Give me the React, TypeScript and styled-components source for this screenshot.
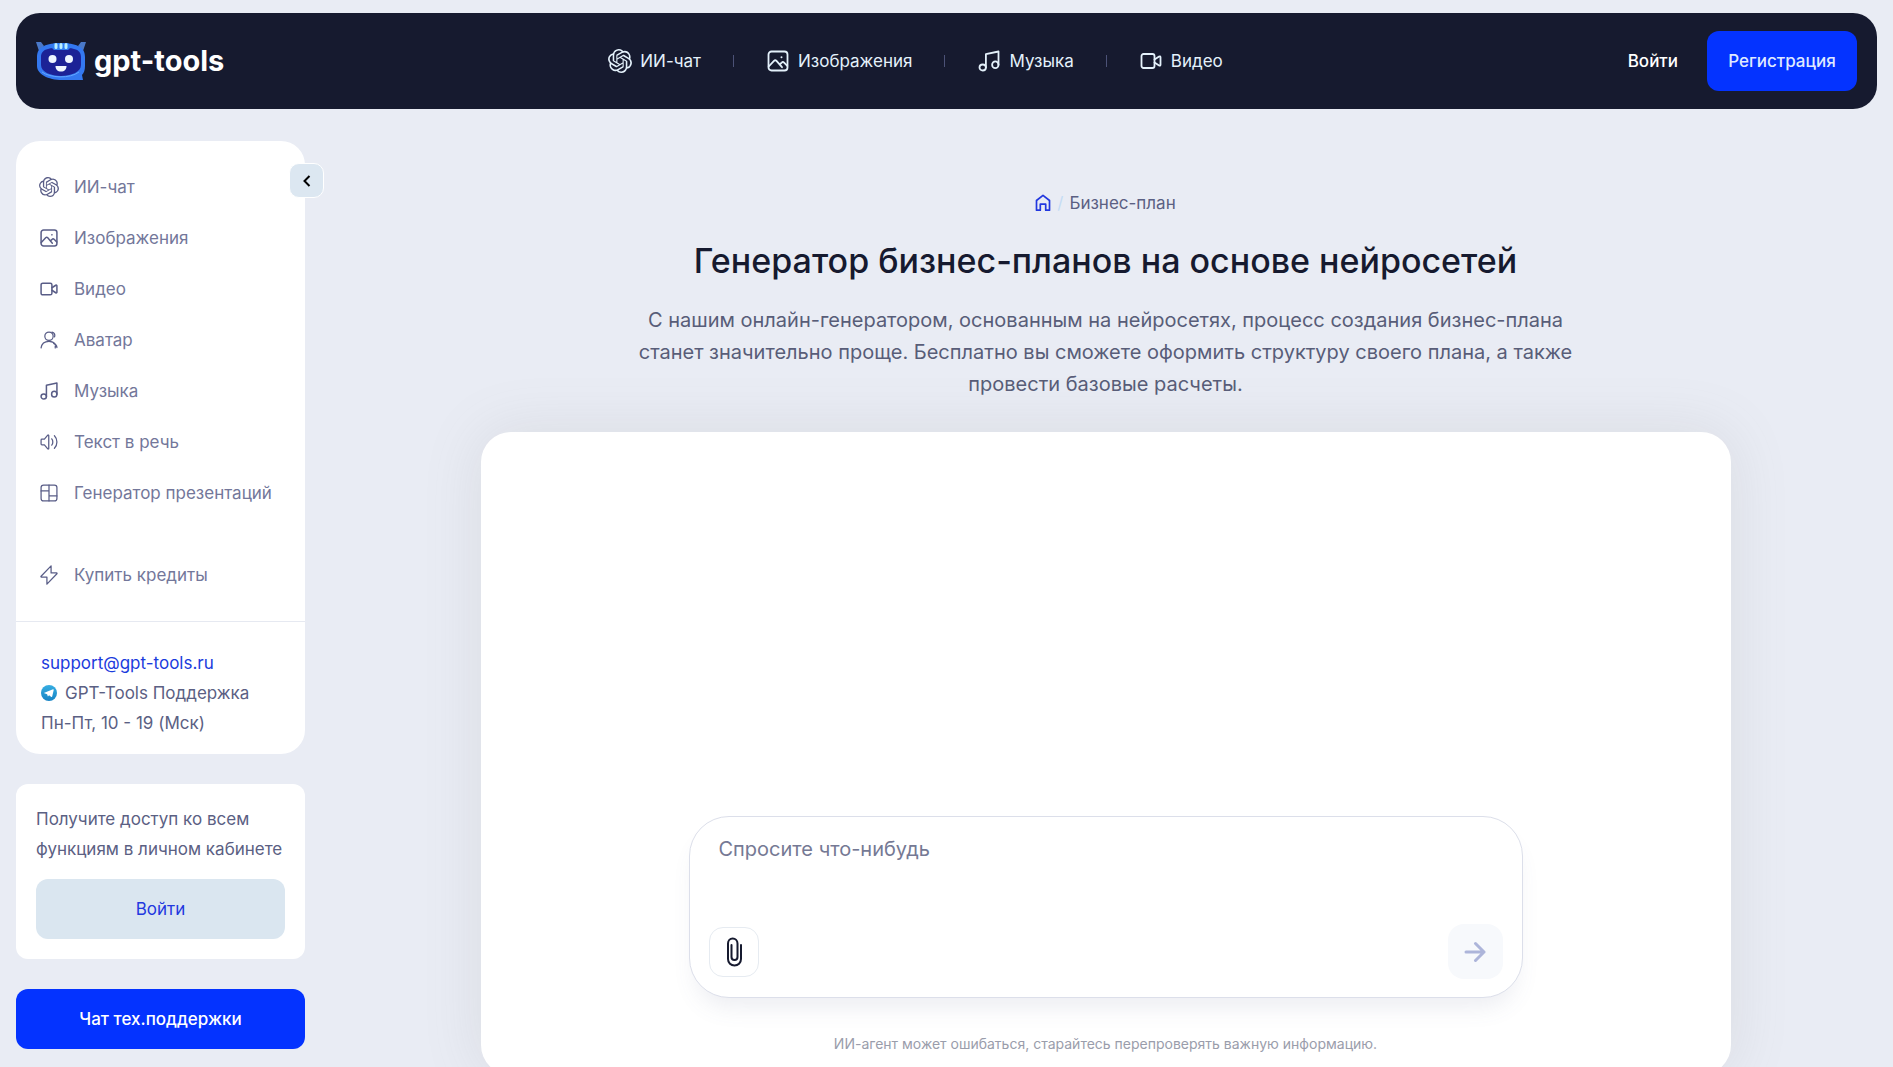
import React from "react";
import styled, { createGlobalStyle } from "styled-components";
import { SiOpenai } from "react-icons/si";

const GlobalStyle = createGlobalStyle`
  *, *::before, *::after { box-sizing: border-box; }
  body {
    margin: 0;
    background: #e9ecf4;
    color: #161a2f;
    font-family: Inter, "Noto Sans", sans-serif;
    font-size: 17px;
    line-height: 24px;
  }
  a { color: inherit; text-decoration: none; }
  button, textarea { font: inherit; }
  button { cursor: pointer; border: 0; padding: 0; }
  ul, ol { margin: 0; padding: 0; list-style: none; }
  h1, p { margin: 0; }
`;

const Page = styled.div`
  padding: 13px 16px 17px;
`;

const Header = styled.header`
  display: flex;
  align-items: center;
  justify-content: space-between;
  padding: 18px 20px;
  border-radius: 24px;
  background: #161a2f;
  color: #fff;
`;

const Logo = styled.a`
  display: flex;
  align-items: center;
  gap: 8px;
  font-size: 29px;
  line-height: 36px;
  font-weight: 700;
`;

const TopNav = styled.nav`
  display: flex;
  align-items: center;
  gap: 32px;
`;

const TopLink = styled.a`
  display: flex;
  align-items: center;
  gap: 8px;
  color: #e4f1fb;
  svg { width: 24px; height: 24px; }
`;

const Separator = styled.span`
  width: 1px;
  height: 12px;
  background: #4c5277;
`;

const Actions = styled.div`
  display: flex;
  align-items: center;
  gap: 8px;
`;

const TextButton = styled.button`
  height: 60px;
  padding: 0 21px;
  background: none;
  color: #fff;
  font-weight: 500;
`;

const PrimaryButton = styled.button<{ $wide?: boolean }>`
  width: ${(p) => (p.$wide ? "100%" : "150px")};
  height: 60px;
  border-radius: 12px;
  background: #0433ff;
  color: ${(p) => (p.$wide ? "#fff" : "#dfe9ff")};
  font-weight: 500;
`;

const Columns = styled.div`
  display: grid;
  grid-template-columns: 289px minmax(0, 1fr);
  gap: 29px;
  align-items: start;
  margin-top: 32px;
`;

const Aside = styled.aside`
  display: flex;
  flex-direction: column;
  gap: 30px;
`;

const MenuCard = styled.div`
  position: relative;
  border-radius: 24px;
  background: #fff;
`;

const CollapseButton = styled.button`
  position: absolute;
  top: 22px;
  right: -19px;
  display: grid;
  place-items: center;
  width: 35px;
  height: 35px;
  border: 1px solid #fff;
  border-radius: 10px;
  background: #dce7f1;
  color: #000;
`;

const Menu = styled.ul`
  padding: 20px 23px 21px;
  border-bottom: 1px solid #e6e9f1;
`;

const MenuItem = styled.li<{ $spaced?: boolean }>`
  margin-top: ${(p) => (p.$spaced ? "31px" : "0")};
`;

const MenuLink = styled.a`
  display: flex;
  align-items: center;
  gap: 15px;
  height: 51px;
  color: #73779a;
  white-space: nowrap;
  svg { flex: none; width: 20px; height: 20px; color: #595d87; }
`;

const Contacts = styled.address`
  display: flex;
  flex-direction: column;
  padding: 26px 25px 16px;
  color: #5b6083;
  font-style: normal;
  line-height: 30px;
`;

const MailLink = styled.a`
  color: #1b3bdd;
`;

const TelegramLink = styled.a`
  display: flex;
  align-items: center;
  gap: 8px;
`;

const AccessCard = styled.section`
  padding: 20px;
  border-radius: 12px;
  background: #fff;
  color: #5b6083;
  line-height: 30px;
`;

const SoftButton = styled.button`
  width: 100%;
  height: 60px;
  margin-top: 15px;
  border-radius: 12px;
  background: #dae6f0;
  color: #2238df;
`;

const Main = styled.main`
  display: flex;
  flex-direction: column;
  align-items: center;
  padding-top: 48px;
`;

const Breadcrumbs = styled.ol`
  display: flex;
  align-items: center;
  gap: 6px;
  color: #5b6083;
  line-height: 28px;
`;

const Crumb = styled.li`
  display: flex;
  align-items: center;
  gap: 6px;
  a { display: flex; color: #2238df; }
`;

const Slash = styled.span`
  color: #c5dcf5;
`;

const Title = styled.h1`
  margin-top: 22px;
  font-size: 34px;
  line-height: 44px;
  font-weight: 500;
  text-align: center;
`;

const Lead = styled.p`
  max-width: 960px;
  margin-top: 21px;
  color: #585d78;
  font-size: 20px;
  line-height: 32px;
  text-align: center;
`;

const ChatCard = styled.section`
  display: flex;
  flex-direction: column;
  align-items: center;
  justify-content: flex-end;
  gap: 34px;
  width: 100%;
  max-width: 1250px;
  min-height: 643px;
  margin-top: 32px;
  padding: 19px 20px;
  border-radius: 30px;
  background: #fff;
  box-shadow: 0 0 60px rgba(120, 120, 120, 0.14);
`;

const Composer = styled.form`
  width: 100%;
  max-width: 834px;
  padding: 16px 19px 18px;
  border: 1px solid #dcdfea;
  border-radius: 40px;
  background: #fff;
  box-shadow: 0 16px 24px -8px rgba(90, 100, 140, 0.12);
`;

const Prompt = styled.textarea`
  display: block;
  width: 100%;
  height: 91px;
  padding: 0 10px;
  border: 0;
  outline: 0;
  resize: none;
  background: none;
  color: #161a2f;
  font-size: 20px;
  line-height: 32px;
  &::placeholder { color: #757994; opacity: 1; }
`;

const Tools = styled.div`
  display: flex;
  align-items: center;
  justify-content: space-between;
`;

const AttachButton = styled.button`
  display: grid;
  place-items: center;
  width: 50px;
  height: 50px;
  border: 1px solid #e6ebf1;
  border-radius: 14px;
  background: #fff;
  color: #161a2f;
`;

const SendButton = styled.button`
  display: grid;
  place-items: center;
  width: 55px;
  height: 55px;
  border-radius: 16px;
  background: #f7f9fc;
  color: #adb5da;
`;

const Note = styled.p`
  color: #9a9dab;
  font-size: 14px;
  line-height: 24px;
`;

const LineIcon = ({ children, weight = 1.5 }: { children: React.ReactNode; weight?: number }) => (
  <svg viewBox="0 0 24 24" fill="none" stroke="currentColor" strokeWidth={weight} strokeLinecap="round" strokeLinejoin="round" aria-hidden="true">
    {children}
  </svg>
);

const ImageIcon = () => (
  <LineIcon weight={1.8}>
    <rect x="2.5" y="2.5" width="19" height="19" rx="3" />
    <path d="M2.7 17.5 8 11.8c.8-.8 1.700-.8 2.500 0l5.500 6.400M14.200 15l1.500-1.400c.8-.8 1.600-.8 2.400 0l3.200 3.300" />
    <path d="M15.500 8.200h.01" strokeWidth="2" />
  </LineIcon>
);

const VideoIcon = () => (
  <LineIcon weight={1.8}>
    <rect x="2.5" y="5" width="13" height="14" rx="2" />
    <path d="m15.500 10.500 4.600-3c.7-.4 1.400-.1 1.400.7v7.600c0 .8-.7 1.100-1.400.7l-4.600-3" />
  </LineIcon>
);

const MusicIcon = () => (
  <LineIcon weight={1.8}>
    <ellipse cx="5.700" cy="18.500" rx="3.200" ry="3" />
    <ellipse cx="18.300" cy="15.800" rx="3.200" ry="3.400" />
    <path d="M8.900 18.500V5.200l12.600-2.700v13.300" />
  </LineIcon>
);

const AvatarIcon = () => (
  <LineIcon>
    <circle cx="12" cy="7.500" r="5" />
    <path d="M2.500 21.500c.6-5 4.500-8 9.500-8 3.500 0 6 1.300 7.500 3.500M15.500 2.500c2.800.8 4 3 3.200 5.800M17.500 16c2.700 1 4 2.800 4 5M19.500 19v2.500" />
  </LineIcon>
);

const SpeechIcon = () => (
  <LineIcon>
    <path d="M2.500 9.500c0-.6.400-1 1-1h3l4-4.700c.5-.5 1.200-.3 1.200.5v15.400c0 .8-.7 1-1.200.5l-4-4.700h-3c-.6 0-1-.4-1-1zM15.300 8.200c1.700 2 1.700 5.600 0 7.600M18.500 4.500c4 4 4 11 0 15" />
  </LineIcon>
);

const SlidesIcon = () => (
  <LineIcon>
    <rect x="2.500" y="2.500" width="19" height="19" rx="3" />
    <path d="M12 2.500v19M2.500 9.500H12M12 15.500h9.500" />
  </LineIcon>
);

const BoltIcon = () => (
  <LineIcon>
    <path d="M14.500 1 2.500 13.500c-.4.500-.2 1 .4 1h6.600L9.500 23 21.500 10.500c.4-.5.200-1-.4-1h-6.600z" />
  </LineIcon>
);

const RobotLogo = () => (
  <svg width="50" height="40" viewBox="0 0 50 40" aria-hidden="true">
    <path d="M0 1h5l3 4-5 5zM50 1h-5l-3 4 5 5z" fill="#4a78c8" />
    <path d="M8 5C15 1 35 1 42 5c5 2 7 6 7 11v9c0 4-1 7-3 9l1 5H26C12 39 1 33 1 25v-9C1 11 3 7 8 5z" fill="#3478f0" />
    <path d="M12 8c6-2 20-2 26 0 5 1 7 4 7 8v8c0 7-10 11-20 11S5 31 5 24v-8c0-4 2-7 7-8z" fill="#1c2296" />
    <path d="M18 2h14l3 4-3 3H18l-3-3z" fill="#2f7df2" />
    <path d="M20 3.500v3M25 3.500v3M30 3.500v3" stroke="#b9f0ff" strokeWidth="3" strokeLinecap="round" />
    <circle cx="16.500" cy="18" r="4" fill="#eef6ff" />
    <circle cx="33" cy="18" r="4" fill="#eef6ff" />
    <path d="M19.500 25h11c0 3.500-2 5.500-5.500 5.500s-5.500-2-5.500-5.500z" fill="#eef6ff" />
    <path d="M6 31c8 6 28 7 37 0" fill="none" stroke="#61a6ff" strokeWidth="1" />
  </svg>
);

const TelegramIcon = () => (
  <svg width="16" height="16" viewBox="0 0 16 16" aria-hidden="true">
    <defs>
      <linearGradient id="tg" x1="0" y1="0" x2="0" y2="1">
        <stop offset="0" stopColor="#37aee2" />
        <stop offset="1" stopColor="#1683c4" />
      </linearGradient>
    </defs>
    <circle cx="8" cy="8" r="8" fill="url(#tg)" />
    <path d="M2.800 7.900 12 4.300c.5-.2.800.1.700.6l-1.500 6.700c-.1.500-.5.600-.9.300L8.100 10.200l-1.200 1.300-.8-2.200z" fill="#fff" />
  </svg>
);

const HomeIcon = () => (
  <svg width="16" height="18" viewBox="0 0 16 18" fill="none" stroke="currentColor" strokeWidth="1.700" strokeLinejoin="round" aria-hidden="true">
    <path d="M1.500 6.500 8 1.300l6.500 5.200v9.700h-3.800v-6H5.300v6H1.500z" />
  </svg>
);

const topLinks = [
  { label: "ИИ-чат", icon: <SiOpenai /> },
  { label: "Изображения", icon: <ImageIcon /> },
  { label: "Музыка", icon: <MusicIcon /> },
  { label: "Видео", icon: <VideoIcon /> },
];

const menuLinks = [
  { label: "ИИ-чат", icon: <SiOpenai /> },
  { label: "Изображения", icon: <ImageIcon /> },
  { label: "Видео", icon: <VideoIcon /> },
  { label: "Аватар", icon: <AvatarIcon /> },
  { label: "Музыка", icon: <MusicIcon /> },
  { label: "Текст в речь", icon: <SpeechIcon /> },
  { label: "Генератор презентаций", icon: <SlidesIcon /> },
  { label: "Купить кредиты", icon: <BoltIcon />, spaced: true },
];

export default function App() {
  return (
    <>
      <GlobalStyle />
      <Page>
        <Header>
          <Logo href="#">
            <RobotLogo />
            gpt-tools
          </Logo>
          <TopNav>
            {topLinks.map((link, i) => (
              <React.Fragment key={link.label}>
                {i > 0 && <Separator />}
                <TopLink href="#">
                  {link.icon}
                  {link.label}
                </TopLink>
              </React.Fragment>
            ))}
          </TopNav>
          <Actions>
            <TextButton type="button">Войти</TextButton>
            <PrimaryButton type="button">Регистрация</PrimaryButton>
          </Actions>
        </Header>
        <Columns>
          <Aside>
            <MenuCard>
              <CollapseButton type="button" aria-label="Свернуть меню">
                <svg width="8" height="12" viewBox="0 0 8 12" fill="none" stroke="currentColor" strokeWidth="2" aria-hidden="true">
                  <path d="M6.500 1 1.500 6l5 5" />
                </svg>
              </CollapseButton>
              <Menu>
                {menuLinks.map((link) => (
                  <MenuItem key={link.label} $spaced={link.spaced}>
                    <MenuLink href="#">
                      {link.icon}
                      {link.label}
                    </MenuLink>
                  </MenuItem>
                ))}
              </Menu>
              <Contacts>
                <MailLink href="mailto:support@gpt-tools.ru">support@gpt-tools.ru</MailLink>
                <TelegramLink href="#">
                  <TelegramIcon />
                  GPT-Tools Поддержка
                </TelegramLink>
                <span>Пн-Пт, 10 - 19 (Мск)</span>
              </Contacts>
            </MenuCard>
            <AccessCard>
              <p>
                Получите доступ ко всем
                <br />
                функциям в личном кабинете
              </p>
              <SoftButton type="button">Войти</SoftButton>
            </AccessCard>
            <PrimaryButton type="button" $wide>
              Чат тех.поддержки
            </PrimaryButton>
          </Aside>
          <Main>
            <Breadcrumbs>
              <Crumb>
                <a href="#" aria-label="Главная">
                  <HomeIcon />
                </a>
                <Slash>/</Slash>
              </Crumb>
              <Crumb>Бизнес-план</Crumb>
            </Breadcrumbs>
            <Title>Генератор бизнес-планов на основе нейросетей</Title>
            <Lead>
              С нашим онлайн-генератором, основанным на нейросетях, процесс создания бизнес-плана станет
              значительно проще. Бесплатно вы сможете оформить структуру своего плана, а также провести базовые
              расчеты.
            </Lead>
            <ChatCard>
              <Composer>
                <Prompt placeholder="Спросите что-нибудь" aria-label="Сообщение" />
                <Tools>
                  <AttachButton type="button" aria-label="Прикрепить файл">
                    <svg width="16" height="30" viewBox="0 0 16 30" fill="none" stroke="currentColor" strokeWidth="2" strokeLinecap="round" aria-hidden="true">
                      <path d="M15 8v14c0 4-3 6.500-6.500 6.500S2 26 2 22V6.500C2 3.500 4 1.500 6.700 1.500s4.800 2 4.800 5V20c0 1.800-1.300 3-3 3s-3-1.200-3-3V8" />
                    </svg>
                  </AttachButton>
                  <SendButton type="submit" aria-label="Отправить">
                    <svg width="22" height="22" viewBox="0 0 22 22" fill="none" stroke="currentColor" strokeWidth="3" strokeLinecap="round" strokeLinejoin="round" aria-hidden="true">
                      <path d="M2 11h18M11.500 2.500 20 11l-8.500 8.500" />
                    </svg>
                  </SendButton>
                </Tools>
              </Composer>
              <Note>ИИ-агент может ошибаться, старайтесь перепроверять важную информацию.</Note>
            </ChatCard>
          </Main>
        </Columns>
      </Page>
    </>
  );
}
